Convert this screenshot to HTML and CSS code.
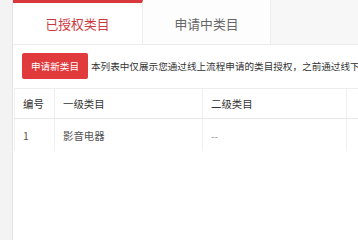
FILE: index.html
```html
<!DOCTYPE html>
<html lang="zh-CN">
<head>
<meta charset="utf-8">
<title>类目授权</title>
<link rel="stylesheet" href="styles.css">
</head>
<body>
<div class="panel">
  <div class="tabs">
    <div class="tab tab-active">已授权类目</div>
    <div class="tab">申请中类目</div>
  </div>
  <div class="toolbar">
    <button class="btn-primary">申请新类目</button>
    <span class="note">本列表中仅展示您通过线上流程申请的类目授权，之前通过线下流程申请的类目授权请联系管理员查看</span>
  </div>
  <table class="grid">
    <colgroup>
      <col class="c-no"><col class="c-first"><col class="c-second"><col class="c-rest">
    </colgroup>
    <thead>
      <tr><th>编号</th><th>一级类目</th><th>二级类目</th><th></th></tr>
    </thead>
    <tbody>
      <tr><td>1</td><td>影音电器</td><td class="muted">--</td><td></td></tr>
    </tbody>
  </table>
</div>
</body>
</html>
```

FILE: styles.css
```css
html, body {
  margin: 0;
  padding: 0;
  height: 100%;
  overflow: hidden;
}
body {
  background: #f3f3f3;
  font-family: "Noto Sans CJK SC", "Liberation Sans", sans-serif;
  color: #333;
}
.panel {
  margin-left: 12px;
  height: 100%;
  background: #fff;
  border-left: 1px solid #e4e4e4;
  overflow: hidden;
}
.tabs {
  display: flex;
  height: 44px;
  background: #f7f7f7;
  border-bottom: 1px solid #ececec;
}
.tab {
  width: 128px;
  box-sizing: border-box;
  display: flex;
  align-items: center;
  justify-content: center;
  font-size: 12.8px;
  color: #666;
  background: #fdfdfd;
  border-right: 1px solid #eeeeee;
  padding-top: 3px;
}
.tab-active {
  width: 130px;
  background: #fff;
  color: #cc3a3f;
  border-top: 3px solid #d8393d;
  padding-top: 0;
}
.toolbar {
  display: flex;
  align-items: center;
  padding: 8px 0 0 9px;
  white-space: nowrap;
}
.btn-primary {
  width: 66px;
  height: 26px;
  border: 0;
  border-radius: 2px;
  background: #e03a3c;
  color: #fff;
  font-family: inherit;
  font-size: 9.6px;
  padding: 0;
  flex: none;
}
.note {
  margin-left: 3px;
  font-size: 9.6px;
  color: #333;
}
.grid {
  margin: 9px 0 0 1px;
  border-collapse: collapse;
  table-layout: fixed;
  width: 360px;
  font-size: 10.4px;
}
.c-no { width: 40px; }
.c-first { width: 148px; }
.c-second { width: 144px; }
.c-rest { width: 28px; }
.grid th, .grid td {
  text-align: left;
  padding: 0 0 0 8px;
  border-left: 1px solid #f0f0f0;
  white-space: nowrap;
}
.grid th {
  height: 29px;
  font-weight: normal;
  color: #333;
  border-top: 1px solid #eeeeee;
  border-bottom: 1px solid #e8e8e8;
}
.grid td {
  height: 32px;
  color: #555;
}
.grid td.muted {
  color: #999;
}
```
